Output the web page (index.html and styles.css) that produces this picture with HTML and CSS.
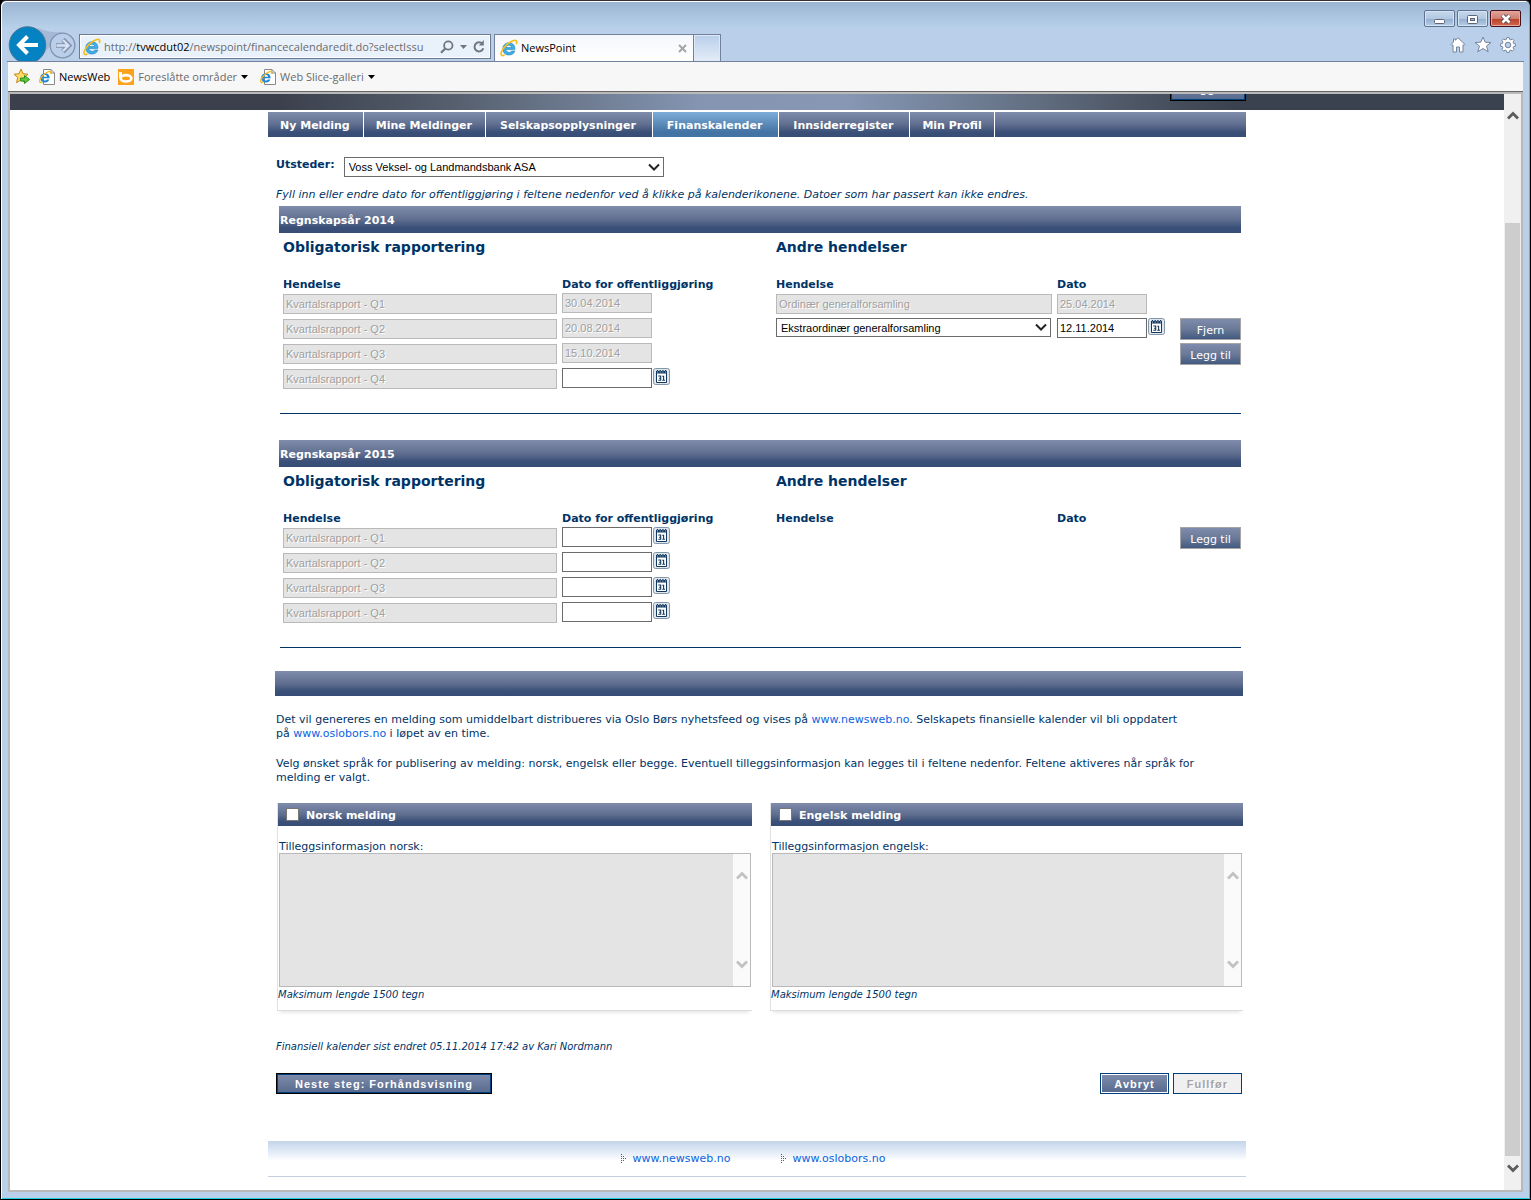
FILE: index.html
```html
<!DOCTYPE html>
<html lang="no">
<head>
<meta charset="utf-8">
<title>NewsPoint</title>
<link rel="stylesheet" href="styles.css">
</head>
<body>
<svg class="defs" aria-hidden="true">
  <symbol id="ie" viewBox="0 0 18 18">
    <path d="M14.6 10.6H5.9C6 12.300 7.300 13.400 9.100 13.400C10.300 13.400 11.200 12.900 11.700 12.100H14.900C14 14.700 11.800 16 9.100 16C5.300 16 2.800 13.500 2.800 9.900C2.800 6.300 5.400 3.800 9 3.800C12.800 3.800 15.100 6.500 14.900 10.300ZM6 8.600H11.700C11.500 7.100 10.500 6.200 8.900 6.200C7.300 6.200 6.200 7.100 6 8.600Z" fill="#3fb0e6" stroke="#1c7cb8" stroke-width=".6"/>
    <path d="M16.200 5.200C17.500 2.500 16.600 .8 13.800 1.500C9.500 2.500 3 8.500 1.400 13C.4 16 1.600 17.400 4.600 16" fill="none" stroke="#f4c020" stroke-width="1.700"/>
  </symbol>
  <symbol id="iepage" viewBox="0 0 16 16">
    <path d="M4.500 .5H12L15.500 4V15.500H4.500Z" fill="#fff" stroke="#888"/>
    <path d="M12 .5V4H15.500" fill="none" stroke="#888"/>
    <path d="M10.700 9.200H3.600C3.800 10.600 4.700 11.500 6 11.500C6.900 11.500 7.500 11.100 7.900 10.500H10.400C9.700 12.500 8.100 13.500 6 13.500C3.100 13.500 1.200 11.600 1.200 8.900C1.200 6.200 3.200 4.300 6 4.300C8.900 4.300 10.700 6.300 10.700 9.200ZM3.700 7.800H8.200C8 6.700 7.200 6.100 5.900 6.100C4.700 6.100 3.900 6.700 3.700 7.800Z" fill="#1f86d8"/>
    <path d="M11.500 5C12.300 3 11.500 2.100 9.700 2.700C6 3.900 1.300 7.900 .7 11.500C.4 13.600 1.600 14 3.400 13" fill="none" stroke="#f0bb1c" stroke-width="1.300"/>
  </symbol>
  <symbol id="cal" viewBox="0 0 17 17">
    <rect x=".5" y=".5" width="16" height="16" rx="2" fill="#dfe6ec" stroke="#8296ab"/>
    <path d="M3.500 4H13.500V14.500H3.500Z" fill="#fff" stroke="#12385f"/>
    <path d="M3 3H14V5.500H3Z" fill="#12385f"/>
    <path d="M4.500 2V4.500M7.200 2V4.500M9.900 2V4.500M12.600 2V4.500" stroke="#12385f" stroke-width="1.300"/>
    <path d="M4.500 3.500V4.500M7.200 3.500V4.500M9.900 3.500V4.500M12.600 3.500V4.500" stroke="#fff" stroke-width=".8"/>
    <path d="M5.300 8H7.700V12.300H5.300M6 10.200H7.700M9.300 8.300H10.600V12.300M9.300 12.300H12" fill="none" stroke="#12385f" stroke-width="1.100"/>
  </symbol>
  <symbol id="up" viewBox="0 0 12 9"><path d="M1 7.500L6 2.500L11 7.500" fill="none" stroke="currentColor" stroke-width="2.800"/></symbol>
  <symbol id="down" viewBox="0 0 12 9"><path d="M1 1.500L6 6.500L11 1.500" fill="none" stroke="currentColor" stroke-width="2.800"/></symbol>
  <symbol id="dots" viewBox="0 0 6 10"><path d="M0 .5H1M0 2.500H1M2 2.500H3M0 4.500H1M2 4.500H3M4 4.500H5M0 6.500H1M2 6.500H3M0 8.500H1" stroke="#0a6cf0"/></symbol>
</svg>
<div class="window">
  <div class="titlebar">
    <button class="winbtn" aria-label="Minimer"><svg width="11" height="16" viewBox="0 0 11 16"><rect x=".5" y="8.500" width="10" height="4" rx="1" fill="#fff" stroke="#5b6579"/></svg></button>
    <button class="winbtn" aria-label="Maksimer"><svg width="11" height="16" viewBox="0 0 11 16"><rect x=".5" y="4.500" width="10" height="8" rx="1" fill="#fff" stroke="#5b6579"/><rect x="3.500" y="7.500" width="4" height="2" fill="#9cb7d6" stroke="#5b6579"/></svg></button>
    <button class="winbtn close" aria-label="Lukk"><svg width="12" height="16" viewBox="0 0 12 16"><path d="M2.500 4.500L9.500 11.500M9.500 4.500L2.500 11.500" stroke="#5b4a55" stroke-width="4.500"/><path d="M2.500 4.500L9.500 11.500M9.500 4.500L2.500 11.500" stroke="#fff" stroke-width="2.600"/></svg></button>
  </div>
  <div class="toolbar">
    <svg class="history" width="69" height="35" viewBox="0 0 69 35">
      <path d="M30 2C39 6 44 6 54 6.500L42 20L34 30Z" fill="#a3b9d6"/>
      <circle cx="54.500" cy="19.500" r="12.300" fill="#b9cee8" stroke="#8391ad" stroke-width="1.300"/>
      <path d="M48 19.500H60M55 13.500L61 19.500L55 25.500" fill="none" stroke="#8391ad" stroke-width="4.600"/>
      <path d="M48.500 19.500H60M55 14L60.500 19.500L55 25" fill="none" stroke="#d5e2f4" stroke-width="2.400"/>
      <circle cx="19.500" cy="19" r="18.300" fill="#0582c2" stroke="#4e7794" stroke-width="1"/>
      <path d="M30 19H12M19.500 10.500L11 19L19.500 27.500" fill="none" stroke="#fff" stroke-width="4"/>
    </svg>
    <div class="address">
      <svg width="18" height="18"><use href="#ie"/></svg>
      <div class="url" role="textbox" aria-label="Adresse">http://<b>tvwcdut02</b>/newspoint/financecalendaredit.do?selectIssu</div>
      <svg width="14" height="14" viewBox="0 0 14 14"><circle cx="8.300" cy="5.500" r="4.200" fill="none" stroke="#707680" stroke-width="1.800"/><path d="M5.300 8.500L1 12.800" stroke="#707680" stroke-width="2.200"/></svg>
      <svg width="7" height="4" viewBox="0 0 7 4"><path d="M0 0H7L3.500 4Z" fill="#707680"/></svg>
      <svg width="12" height="13" viewBox="0 0 12 13"><path d="M9.500 4A4.500 4.500 0 1 0 10.300 8.300" fill="none" stroke="#707680" stroke-width="2"/><path d="M5.800 5.500H10.800V0Z" fill="#707680"/></svg>
    </div>
    <div class="tab"><svg width="18" height="18"><use href="#ie"/></svg><span>NewsPoint</span>
      <svg width="9" height="9" viewBox="0 0 9 9"><path d="M1 1L8 8M8 1L1 8" stroke="#a5a5a5" stroke-width="2"/></svg></div>
    <button class="newtab" aria-label="Ny fane"></button>
    <div class="tools">
      <svg width="16" height="16" viewBox="0 0 16 16"><path d="M8 .8L15 7.500L14 8.500L13 7.800V15H9.500V10H6.500V15H3V7.800L2 8.500L1 7.500L3.500 5V2H5.500V3.200Z" fill="#fff" stroke="#76859c"/></svg>
      <svg width="18" height="17" viewBox="0 0 18 17"><path d="M9 1L11.200 6.200L17 6.500L12.500 10L14.200 15.800L9 12.500L3.800 15.800L5.500 10L1 6.500L6.800 6.200Z" fill="#fff" stroke="#76859c"/></svg>
      <svg width="16" height="16" viewBox="0 0 16 16"><path d="M6.800 .6H9.200L9.600 2.400L10.800 2.900L12.400 1.900L14.100 3.600L13.100 5.200L13.600 6.400L15.400 6.800V9.200L13.600 9.600L13.100 10.800L14.100 12.400L12.400 14.100L10.800 13.100L9.600 13.600L9.200 15.400H6.800L6.400 13.600L5.200 13.100L3.600 14.100L1.900 12.400L2.900 10.800L2.400 9.600L.6 9.200V6.800L2.400 6.400L2.900 5.200L1.900 3.600L3.600 1.900L5.200 2.900L6.400 2.400Z" fill="#fff" stroke="#76859c"/><circle cx="8" cy="8" r="2.800" fill="#b9cfea" stroke="#76859c"/></svg>
    </div>
  </div>
  <div class="favorites">
    <svg width="18" height="17" viewBox="0 0 18 17"><path d="M8 1L10 5.700L15 6.200L11.200 9.500L12.200 14.500L8 12L3.500 14.700L4.700 9.500L1 6.200L6 5.700Z" fill="#ffd96a" stroke="#c48a1c"/><path d="M7.500 10H11.500V7.500L16.500 11.500L11.500 15.500V13H7.500Z" fill="#5ccc3a" stroke="#2c8c1c"/></svg>
    <a class="fav own" href="#"><svg width="16" height="16"><use href="#iepage"/></svg>NewsWeb</a>
    <a class="fav" href="#"><svg width="16" height="16" viewBox="0 0 16 16"><rect width="16" height="16" fill="#fba31c"/><path d="M2.500 3V9" stroke="#fff" stroke-width="3"/><ellipse cx="8" cy="9.300" rx="5.400" ry="3.200" fill="none" stroke="#fff" stroke-width="2.600"/></svg>Foreslåtte områder<svg class="caret" width="7" height="4" viewBox="0 0 7 4"><path d="M0 0H7L3.500 4Z"/></svg></a>
    <a class="fav" href="#"><svg width="16" height="16"><use href="#iepage"/></svg>Web Slice-galleri<svg class="caret" width="7" height="4" viewBox="0 0 7 4"><path d="M0 0H7L3.500 4Z"/></svg></a>
  </div>
  <div class="viewport">
    <div class="page">
      <header class="band"><div class="container"><button class="btn primary">Logg ut</button></div></header>
      <div class="container">
        <nav class="menu">
          <a href="#">Ny Melding</a><a href="#">Mine Meldinger</a><a href="#">Selskapsopplysninger</a><a class="active" href="#">Finanskalender</a><a href="#">Innsiderregister</a><a href="#">Min Profil</a>
        </nav>
        <main>
          <div class="issuer">
            <label for="issuer">Utsteder:</label>
            <select id="issuer"><option>Voss Veksel- og Landmandsbank ASA</option></select>
          </div>
          <p class="intro">Fyll inn eller endre dato for offentliggjøring i feltene nedenfor ved å klikke på kalenderikonene. Datoer som har passert kan ikke endres.</p>

          <section class="year">
            <h2 class="bar">Regnskapsår 2014</h2>
            <div class="reports">
              <div>
                <h3>Obligatorisk rapportering</h3>
                <table>
                  <thead><tr><th class="event">Hendelse</th><th>Dato for offentliggjøring</th></tr></thead>
                  <tbody>
                    <tr><td><input class="name" aria-label="Hendelse" value="Kvartalsrapport - Q1" disabled></td><td><input class="date" aria-label="Dato" value="30.04.2014" disabled></td></tr>
                    <tr><td><input class="name" aria-label="Hendelse" value="Kvartalsrapport - Q2" disabled></td><td><input class="date" aria-label="Dato" value="20.08.2014" disabled></td></tr>
                    <tr><td><input class="name" aria-label="Hendelse" value="Kvartalsrapport - Q3" disabled></td><td><input class="date" aria-label="Dato" value="15.10.2014" disabled></td></tr>
                    <tr><td><input class="name" aria-label="Hendelse" value="Kvartalsrapport - Q4" disabled></td><td><div class="pick"><input class="date" aria-label="Dato"><button class="cal" aria-label="Velg dato"><svg width="17" height="17"><use href="#cal"/></svg></button></div></td></tr>
                  </tbody>
                </table>
              </div>
              <div>
                <h3>Andre hendelser</h3>
                <table>
                  <thead><tr><th class="other">Hendelse</th><th>Dato</th><th class="action"></th></tr></thead>
                  <tbody>
                    <tr><td><input class="name" aria-label="Hendelse" value="Ordinær generalforsamling" disabled></td><td><input class="date low" aria-label="Dato" value="25.04.2014" disabled></td><td></td></tr>
                    <tr><td><select class="kind" aria-label="Hendelse"><option>Ekstraordinær generalforsamling</option></select></td><td><div class="pick"><input class="date" aria-label="Dato" value="12.11.2014"><button class="cal" aria-label="Velg dato"><svg width="17" height="17"><use href="#cal"/></svg></button></div></td><td><button class="small">Fjern</button></td></tr>
                    <tr><td></td><td></td><td><button class="small">Legg til</button></td></tr>
                  </tbody>
                </table>
              </div>
            </div>
          </section>

          <section class="year">
            <h2 class="bar">Regnskapsår 2015</h2>
            <div class="reports">
              <div>
                <h3>Obligatorisk rapportering</h3>
                <table>
                  <thead><tr><th class="event">Hendelse</th><th>Dato for offentliggjøring</th></tr></thead>
                  <tbody>
                    <tr><td><input class="name" aria-label="Hendelse" value="Kvartalsrapport - Q1" disabled></td><td><div class="pick"><input class="date" aria-label="Dato"><button class="cal" aria-label="Velg dato"><svg width="17" height="17"><use href="#cal"/></svg></button></div></td></tr>
                    <tr><td><input class="name" aria-label="Hendelse" value="Kvartalsrapport - Q2" disabled></td><td><div class="pick"><input class="date" aria-label="Dato"><button class="cal" aria-label="Velg dato"><svg width="17" height="17"><use href="#cal"/></svg></button></div></td></tr>
                    <tr><td><input class="name" aria-label="Hendelse" value="Kvartalsrapport - Q3" disabled></td><td><div class="pick"><input class="date" aria-label="Dato"><button class="cal" aria-label="Velg dato"><svg width="17" height="17"><use href="#cal"/></svg></button></div></td></tr>
                    <tr><td><input class="name" aria-label="Hendelse" value="Kvartalsrapport - Q4" disabled></td><td><div class="pick"><input class="date" aria-label="Dato"><button class="cal" aria-label="Velg dato"><svg width="17" height="17"><use href="#cal"/></svg></button></div></td></tr>
                  </tbody>
                </table>
              </div>
              <div>
                <h3>Andre hendelser</h3>
                <table>
                  <thead><tr><th class="other">Hendelse</th><th>Dato</th><th class="action"></th></tr></thead>
                  <tbody><tr><td></td><td></td><td><button class="small">Legg til</button></td></tr></tbody>
                </table>
              </div>
            </div>
          </section>

          <div class="bar divider"></div>
          <p class="text">Det vil genereres en melding som umiddelbart distribueres via Oslo Børs nyhetsfeed og vises på <a href="#">www.newsweb.no</a>. Selskapets finansielle kalender vil bli oppdatert<br>på <a href="#">www.oslobors.no</a> i løpet av en time.</p>
          <p class="text">Velg ønsket språk for publisering av melding: norsk, engelsk eller begge. Eventuell tilleggsinformasjon kan legges til i feltene nedenfor. Feltene aktiveres når språk for<br>melding er valgt.</p>

          <div class="panels">
            <section class="panel">
              <label class="bar panel-title"><input type="checkbox">Norsk melding</label>
              <label class="caption" for="no">Tilleggsinformasjon norsk:</label>
              <div class="area"><textarea id="no" disabled></textarea><div class="areascroll"><svg width="12" height="9"><use href="#up"/></svg><svg width="12" height="9"><use href="#down"/></svg></div></div>
              <p class="note">Maksimum lengde 1500 tegn</p>
            </section>
            <section class="panel">
              <label class="bar panel-title"><input type="checkbox">Engelsk melding</label>
              <label class="caption" for="en">Tilleggsinformasjon engelsk:</label>
              <div class="area"><textarea id="en" disabled></textarea><div class="areascroll"><svg width="12" height="9"><use href="#up"/></svg><svg width="12" height="9"><use href="#down"/></svg></div></div>
              <p class="note">Maksimum lengde 1500 tegn</p>
            </section>
          </div>

          <p class="note changed">Finansiell kalender sist endret 05.11.2014 17:42 av Kari Nordmann</p>
          <div class="actions">
            <button class="btn primary">Neste steg: Forhåndsvisning</button>
            <button class="btn cancel">Avbryt</button>
            <button class="btn" disabled>Fullfør</button>
          </div>
        </main>
        <footer>
          <a href="#"><svg width="6" height="10"><use href="#dots"/></svg>www.newsweb.no</a>
          <a href="#"><svg width="6" height="10"><use href="#dots"/></svg>www.oslobors.no</a>
        </footer>
      </div>
    </div>
    <div class="scroll">
      <svg width="12" height="9"><use href="#up"/></svg>
      <div class="thumb"></div>
      <svg width="12" height="9"><use href="#down"/></svg>
    </div>
  </div>
</div>
</body>
</html>
```

FILE: styles.css
```css
* { box-sizing: border-box; }
body { margin: 0; font: 11px/14px Verdana, "DejaVu Sans", sans-serif; color: #003366; background: #000; }
h2, h3, p { margin: 0; }
a { color: #0a62e0; text-decoration: none; }
button, input, select, textarea { font: 11px "Liberation Sans", Arial, sans-serif; border-radius: 0; margin: 0; }
button { padding: 0; }
svg { display: block; flex: none; }
.defs { position: absolute; width: 0; height: 0; }

/* browser window */
.window { display: flex; flex-direction: column; min-height: 100vh; padding: 1px 6px 7px; border: 1px solid #000; border-top-color: #332f3a; border-radius: 6px 6px 0 0; background: linear-gradient(#9ab3d2, #b8d1e9 27px, #b9cfea 28px); box-shadow: inset 1px 1px #fff, inset -1px -1px #1fd0e0; }
.titlebar { display: flex; justify-content: flex-end; gap: 2px; height: 27px; padding: 8px 3px 0 0; }
.winbtn { display: flex; justify-content: center; width: 31px; height: 17px; border: 1px solid #5f7291; border-radius: 2px; background: linear-gradient(#c6d8ec, #b2c8e0 50%, #92afcf 51%, #b5cde6); box-shadow: inset 0 0 0 1px #d5e4f3; }
.winbtn.close { border-color: #47101b; background: linear-gradient(#e2a39a, #d07f72 50%, #b83f28 51%, #cf6a50); box-shadow: inset 0 0 0 1px #e5a79d; }
.toolbar { display: flex; align-items: flex-end; height: 33px; padding: 0 1px; border-bottom: 1px solid #72829c; font: 11px/16px "Open Sans", sans-serif; color: #000; }
.history { margin-right: 2px; }
.address { display: flex; align-items: center; flex: 0 1 412px; min-width: 0; height: 25px; margin-bottom: 2px; padding: 0 5px 0 3px; border: 1px solid #6d7b91; background: #e9f1fb; box-shadow: inset 0 0 0 1px #fff; gap: 6px; }
.url { flex: 1; min-width: 0; margin-left: -3px; overflow: hidden; white-space: nowrap; color: #6b6b6b; }
.url b { font-weight: 400; color: #000; }
.tab { display: flex; align-items: center; gap: 3px; flex: 0 1 200px; height: 27px; margin-left: 3px; padding: 0 6px 0 5px; border: 1px solid #72829c; border-bottom: 0; background: linear-gradient(#f4f7fb, #fff); }
.tab span { flex: 1; }
.newtab { width: 27px; height: 27px; border: 1px solid #72829c; border-width: 1px 1px 0 0; background: linear-gradient(#b9cfea, #e4ecf8); box-shadow: inset 0 0 0 1px #dfe9f6; }
.tools { display: flex; align-items: center; gap: 8px; margin-left: auto; padding: 0 7px 8px 0; }
.favorites { display: flex; align-items: center; height: 30px; margin: 0 1px; padding-left: 5px; border-bottom: 1px solid #666; background: #f7f7f7; font: 11px/16px "Open Sans", sans-serif; }
.fav { display: flex; align-items: center; gap: 4px; margin-left: 8px; color: #6b6b6b; }
.fav.own { color: #000; }
.fav .caret { margin-right: 4px; }

/* scrolled page */
.viewport { display: flex; flex: 1; margin: 0 1px; border: 2px solid #b9b9b9; background: #fff; }
.page { flex: 1; min-width: 0; }
.scroll { display: flex; flex-direction: column; align-items: center; width: 17px; padding: 17px 0; background: #f0f0f0; color: #5c5c5c; }
.thumb { flex: 1; width: 15px; margin: 103px 0 8px; background: #cdcdcd; }
.container { max-width: 978px; margin: 0 auto; }
.band { height: 16px; overflow: hidden; background: linear-gradient(90deg, #3b404c 18%, #56606f 30%, #8494b1 46%, #8797b4 56%, #6d7b91 65%, #505a69 74%, #3b424f 82%); }
.band .container { display: flex; justify-content: flex-end; align-items: flex-end; height: 7px; }
.band .btn { flex: none; width: 76px; padding-bottom: 3px; }
.bar, .menu { background: linear-gradient(#808cac, #5f6e8f 50%, #3b5078 80%, #384d76); color: #fff; font-weight: 700; }
.menu { display: flex; height: 25px; margin-top: 2px; }
.menu a { padding: 0 13px 0 12px; border-right: 1px solid #fff; line-height: 27px; color: #fff; }
.menu a:nth-child(n+3) { padding-left: 14px; padding-right: 16px; }
.menu a:last-child { padding: 0 12px; }
.menu .active { background: linear-gradient(#7fadd9, #4374a3 80%); }

main { margin: 0 3px 0 7px; }
.issuer { display: flex; gap: 9px; margin: 20px 0 10px; padding-left: 1px; }
.issuer label { font-weight: 700; line-height: 16px; }
select { appearance: none; height: 20px; padding: 0 18px 0 4px; border: 1px solid #6b6b6b; color: #000; background: #fff url("data:image/svg+xml,%3Csvg xmlns='http://www.w3.org/2000/svg' width='12' height='9'%3E%3Cpath d='M1 1.500L6 6.500L11 1.500' fill='none' stroke='%23222' stroke-width='2'/%3E%3C/svg%3E") no-repeat right 3px center; }
#issuer { width: 320px; }
.intro { padding-left: 1px; font-style: italic; line-height: 16px; }
.year { margin: 3px 2px 0 4px; }
.year .bar { height: 27px; padding-left: 1px; font-size: 11px; line-height: 29px; }
.reports { display: grid; grid-template-columns: 493fr 465fr; margin: 0 0 26px 1px; padding: 0 0 20px 3px; border-bottom: 1px solid #003366; }
h3 { font-size: 14px; line-height: 28px; }
table { width: 100%; margin-top: 13px; border-collapse: collapse; table-layout: fixed; }
th { height: 19px; padding: 3px 0 0; text-align: left; line-height: 16px; }
td { height: 25px; padding: 0; vertical-align: top; }
.event { width: 279px; }
.other { width: 281px; }
.action { width: 61px; }
.reports input { height: 20px; padding: 0 2px; border: 1px solid #6b6b6b; color: #000; background: #fff; }
.reports input:disabled { border-color: #b9b9b9; color: #a0a0a0; background: #e4e4e4; text-shadow: 1px 1px #fff; }
.name, .kind, .date { display: block; }
.reports .name { width: calc(100% - 5px); margin-top: 1px; }
.kind { width: calc(100% - 6px); height: 19px; }
.date { width: 90px; }
.reports .low { margin-top: 1px; }
.pick { display: flex; gap: 1px; }
.cal { height: 17px; border: 0; background: none; }
.small { display: block; width: 61px; height: 22px; padding-top: 3px; border: 1px solid #a5a5a5; background: linear-gradient(#7f8bac, #6b7a99 50%, #425a80); color: #fff; font: 11px/16px Verdana, "DejaVu Sans", sans-serif; }
.divider { height: 25px; margin: -3px 0 17px; }
.text { margin: 0 0 16px; padding-left: 1px; }

.panels { display: grid; grid-template-columns: 475fr 473fr; gap: 18px; margin: 18px 0 28px 2px; }
.panel { height: 208px; border-left: 1px solid #e2e2e2; border-bottom: 1px solid #ddd; box-shadow: 0 4px 4px -3px #ddd; }
.panel-title { display: flex; align-items: center; gap: 7px; height: 23px; padding: 2px 0 0 8px; }
.panel-title input { appearance: none; width: 13px; height: 13px; margin-bottom: 2px; border: 1px solid #777; background: #fff; }
.caption { display: block; margin: 14px 0 -1px 1px; }
.area { display: flex; height: 134px; margin: 0 1px; border: 1px solid #b9b9b9; }
.area textarea { flex: 1; min-width: 0; border: 0; resize: none; background: #e4e4e4; }
.areascroll { display: flex; flex-direction: column; justify-content: space-between; align-items: center; width: 17px; padding: 17px 0; background: #fafafa; color: #c2c2c2; }
.note { font-size: 10px; font-style: italic; line-height: 16px; }
.changed { padding-left: 1px; }
.actions { display: flex; gap: 4px; margin-top: 18px; padding: 0 1px; }
.btn { height: 21px; padding: 0 13px; border: 1px solid #003f7d; background: linear-gradient(#808cac, #566a8d); color: #fff; font-weight: 700; letter-spacing: 1px; }
.primary { border: 1px solid #000; box-shadow: inset 0 0 0 1px #003f7d; }
.actions .primary { margin-right: auto; padding: 0 18px; }
.cancel { box-shadow: inset 0 0 0 1px #fff; }
.btn:disabled { background: #f0f0f0; color: #a5a5a5; text-shadow: 1px 1px #fff; }
footer { display: flex; justify-content: center; gap: 50px; height: 36px; margin: 47px 0 13px; padding: 11px 8px 0 0; border-bottom: 1px solid #c5cfdd; background: linear-gradient(#c3d5ea, #e3ebf7 11px, #fff 20px); }
footer a { display: flex; align-items: center; gap: 6px; height: 14px; }
```
